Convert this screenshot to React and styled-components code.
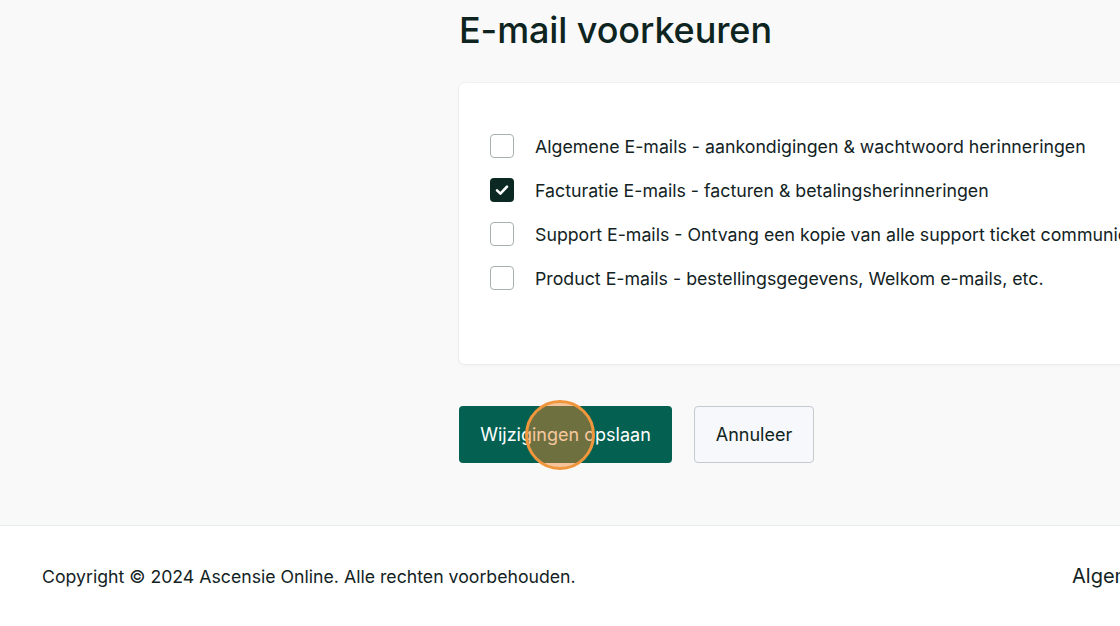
import React from "react";
import styled, { createGlobalStyle } from "styled-components";

const Global = createGlobalStyle`
  html, body { margin: 0; padding: 0; }
  body {
    background: #f9f9f9;
    font-family: "Inter", "Liberation Sans", sans-serif;
    color: #0e2420;
    overflow: hidden;
  }
  * { box-sizing: border-box; }
`;

const Page = styled.div`
  width: 1120px;
  height: 626px;
  display: flex;
  flex-direction: column;
  overflow: hidden;
`;

const Main = styled.main`
  display: grid;
  grid-template-columns: 459px 1fr;
  height: 526px;
  border-bottom: 1px solid #e8eeed;
  background: #f9f9f9;
`;

const Content = styled.section`
  display: flex;
  flex-direction: column;
  padding-top: 9px;
  min-width: 0;
`;

const Title = styled.h1`
  margin: 0;
  font-size: 36px;
  line-height: 43px;
  font-weight: 500;
  letter-spacing: -0.1px;
  color: #0e2420;
`;

const Card = styled.div`
  margin-top: 31px;
  width: 820px;
  height: 281px;
  background: #fff;
  border-radius: 6px;
  box-shadow: 0 0 0 1px rgba(0, 0, 0, 0.025), 0 1px 4px rgba(0, 0, 0, 0.05);
  padding: 41px 31px 0;
  display: flex;
  flex-direction: column;
`;

const Row = styled.label`
  display: flex;
  align-items: center;
  gap: 21px;
  height: 44px;
  font-size: 17.75px;
  white-space: nowrap;
  color: #13231f;
`;

const Box = styled.span`
  width: 24px;
  height: 24px;
  flex-shrink: 0;
  border-radius: 4px;
  border: ${(p) => (p.$checked ? "none" : "1.5px solid #a7b1af")};
  background: ${(p) => (p.$checked ? "#0c2823" : "#fff")};
  display: flex;
  align-items: center;
  justify-content: center;
`;

const Actions = styled.div`
  margin-top: 42px;
  display: flex;
  gap: 22px;
`;

const Button = styled.button`
  position: relative;
  height: 57px;
  padding: 0;
  width: ${(p) => p.$w}px;
  border-radius: 4px;
  font-family: inherit;
  font-size: 18px;
  font-weight: 400;
  cursor: pointer;
  background: ${(p) => (p.$primary ? "#046152" : "#f6f8fb")};
  color: ${(p) => (p.$primary ? "#ffffff" : "#0e2420")};
  border: ${(p) => (p.$primary ? "none" : "1.5px solid #c5c9d0")};
`;

const Click = styled.span`
  position: absolute;
  left: 66px;
  top: -6px;
  width: 70px;
  height: 70px;
  border-radius: 50%;
  border: 3px solid #f0963c;
  background: rgba(240, 130, 40, 0.45);
  pointer-events: none;
`;

const Footer = styled.footer`
  flex: 1;
  background: #ffffff;
  display: grid;
  grid-template-columns: 1030px auto;
  align-items: center;
  padding-left: 42px;
  font-size: 17.7px;
  color: #13231f;
  white-space: nowrap;
`;

const FootLink = styled.a`
  color: inherit;
  text-decoration: none;
  font-size: 20px;
`;

const Check = () => (
  <svg width="16" height="16" viewBox="0 0 16 16" fill="none">
    <path d="M3 8.4 L6.4 11.6 L13 4.6" stroke="#fff" strokeWidth="2.6" strokeLinecap="round" strokeLinejoin="round" />
  </svg>
);

const prefs = [
  { text: "Algemene E-mails - aankondigingen & wachtwoord herinneringen", checked: false },
  { text: "Facturatie E-mails - facturen & betalingsherinneringen", checked: true },
  { text: "Support E-mails - Ontvang een kopie van alle support ticket communicatie", checked: false },
  { text: "Product E-mails - bestellingsgegevens, Welkom e-mails, etc.", checked: false },
];

export default function App() {
  return (
    <Page>
      <Global />
      <Main>
        <div />
        <Content>
          <Title>E-mail voorkeuren</Title>
          <Card>
            {prefs.map((p) => (
              <Row key={p.text}>
                <Box $checked={p.checked}>{p.checked && <Check />}</Box>
                {p.text}
              </Row>
            ))}
          </Card>
          <Actions>
            <Button $primary $w={213}>
              Wijzigingen opslaan
              <Click />
            </Button>
            <Button $w={120}>Annuleer</Button>
          </Actions>
        </Content>
      </Main>
      <Footer>
        <span>Copyright © 2024 Ascensie Online. Alle rechten voorbehouden.</span>
        <FootLink href="#">Algemene voorwaarden</FootLink>
      </Footer>
    </Page>
  );
}
